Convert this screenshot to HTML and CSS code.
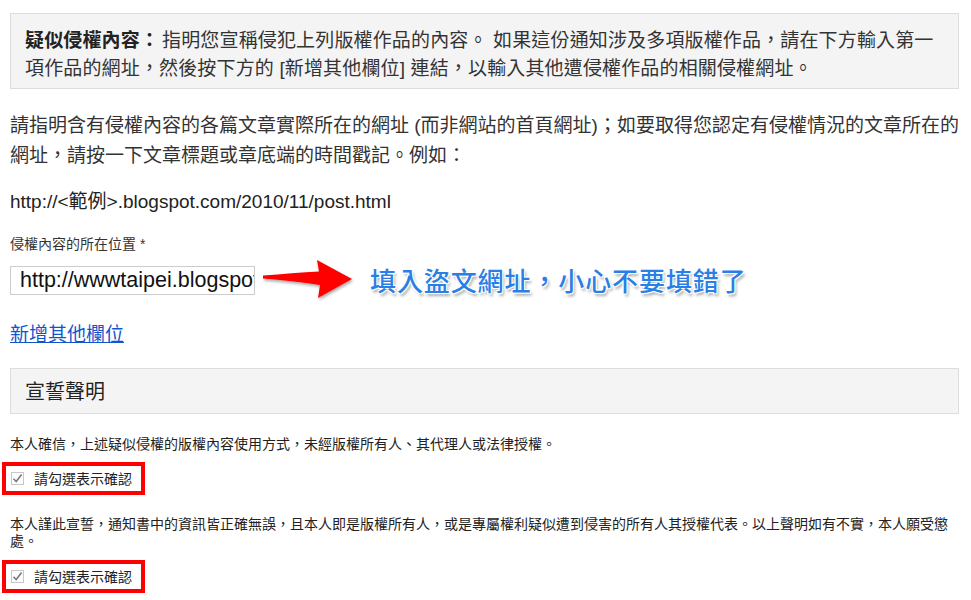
FILE: index.html
```html
<!DOCTYPE html>
<html lang="zh-Hant">
<head>
<meta charset="utf-8">
<link rel="stylesheet" href="styles.css">
</head>
<body>
<div class="page">
  <div class="notice"><b class="notice-title">疑似侵權內容：</b><span class="notice-body">指明您宣稱侵犯上列版權作品的內容。 如果這份通知涉及多項版權作品，請在下方輸入第一項作品的網址，然後按下方的 [新增其他欄位] 連結，以輸入其他遭侵權作品的相關侵權網址。</span></div>

  <p class="para">請指明含有侵權內容的各篇文章實際所在的網址 (而非網站的首頁網址)；如要取得您認定有侵權情況的文章所在的網址，請按一下文章標題或章底端的時間戳記。例如：</p>

  <p class="example">http://&lt;範例&gt;.blogspot.com/2010/11/post.html</p>

  <label class="label" for="url">侵權內容的所在位置 *</label>

  <div class="input-row">
    <input id="url" class="url-input" type="text" value="http://wwwtaipei.blogspot.com/">
    <svg class="arrow" width="96" height="46" viewBox="0 0 96 46" aria-hidden="true">
      <defs>
        <filter id="sh" x="-20%" y="-30%" width="140%" height="160%">
          <feDropShadow dx="1" dy="2" stdDeviation="1.5" flood-color="#000" flood-opacity="0.35"/>
        </filter>
      </defs>
      <path d="M1 18.5 C20 17 40 15.5 57 14.5 L55 3 L90 22 L56 41 L58 28 C40 25 20 23 1 21.5 Z" fill="#ff0000" filter="url(#sh)"/>
    </svg>
    <span class="caption">填入盜文網址，小心不要填錯了</span>
  </div>

  <a class="add-link" href="#">新增其他欄位</a>

  <div class="section-head">宣誓聲明</div>

  <p class="small first">本人確信，上述疑似侵權的版權內容使用方式，未經版權所有人、其代理人或法律授權。</p>

  <div class="confirm">
    <span class="check"><svg width="11" height="11" viewBox="0 0 11 11"><path d="M1.5 5.8 L4.2 8.6 L9.6 1.6" fill="none" stroke="#7a7a7a" stroke-width="1.6"/></svg></span>
    <span class="confirm-text">請勾選表示確認</span>
  </div>

  <p class="small second">本人謹此宣誓，通知書中的資訊皆正確無誤，且本人即是版權所有人，或是專屬權利疑似遭到侵害的所有人其授權代表。以上聲明如有不實，本人願受懲處。</p>

  <div class="confirm">
    <span class="check"><svg width="11" height="11" viewBox="0 0 11 11"><path d="M1.5 5.8 L4.2 8.6 L9.6 1.6" fill="none" stroke="#7a7a7a" stroke-width="1.6"/></svg></span>
    <span class="confirm-text">請勾選表示確認</span>
  </div>
</div>
</body>
</html>
```
FILE: styles.css
```css
html, body {
  margin: 0;
  padding: 0;
  background: #ffffff;
}

body {
  font-family: "Liberation Sans", Arial, "Noto Sans CJK TC", sans-serif;
  color: #222222;
}

.page {
  width: 949px;
  padding: 13px 0 0 10px;
}

.notice {
  border: 1px solid #dddddd;
  background: #f4f4f4;
  padding: 13px 14px 5px 14px;
  font-size: 19px;
  line-height: 28px;
  letter-spacing: 0.15px;
  color: #333333;
}

.notice-title {
  display: inline-block;
  font-weight: 700;
  color: #222222;
  margin-right: 3px;
}

.para {
  margin: 22px 0 0 0;
  font-size: 19px;
  line-height: 30px;
  color: #333333;
}

.example {
  margin: 16px 0 0 0;
  font-size: 19px;
  line-height: 30px;
  color: #222222;
}

.label {
  display: block;
  margin-top: 17px;
  font-size: 14px;
  line-height: 20px;
  color: #333333;
}

.input-row {
  display: flex;
  align-items: center;
  margin-top: 11px;
  height: 30px;
}

.url-input {
  box-sizing: border-box;
  width: 245px;
  height: 29px;
  border: 1px solid #cccccc;
  padding: 0 0 0 9px;
  margin: 0;
  font-family: "Liberation Sans", Arial, sans-serif;
  font-size: 21.5px;
  color: #111111;
  background: #ffffff;
  outline: none;
}

.arrow {
  margin-left: 7px;
  flex: none;
}

.caption {
  margin-left: 12px;
  font-family: "Noto Sans CJK TC", sans-serif;
  font-size: 26px;
  font-weight: 500;
  letter-spacing: 0.9px;
  line-height: 30px;
  color: #2a7fe6;
  text-shadow:
    -1px -1px 0 #fff, 1px -1px 0 #fff, -1px 1px 0 #fff, 1px 1px 0 #fff,
    2px 3px 3px rgba(0, 0, 0, 0.35);
}

.add-link {
  display: block;
  width: max-content;
  margin-top: 26px;
  font-size: 19px;
  line-height: 28px;
  color: #1155cc;
  text-decoration: underline;
}

.section-head {
  box-sizing: border-box;
  margin-top: 19px;
  height: 46px;
  border: 1px solid #dddddd;
  background: #f4f4f4;
  padding: 3px 14px 0 14px;
  font-size: 20px;
  line-height: 41px;
  color: #222222;
}

.small {
  font-size: 14px;
  color: #222222;
}

.small.first {
  margin: 21px 0 0 0;
  line-height: 18px;
}

.small.second {
  margin: 21px 0 0 0;
  line-height: 17px;
}

.confirm {
  box-sizing: border-box;
  display: flex;
  align-items: center;
  width: 143px;
  height: 33px;
  margin: 9px 0 0 -8px;
  border: 4px solid #ff0000;
  padding-left: 5px;
}

.small.second + .confirm {
  margin-top: 10px;
}

.check {
  box-sizing: border-box;
  width: 13px;
  height: 13px;
  border: 1px solid #c8c8c8;
  background: #fdfdfd;
  display: flex;
  align-items: center;
  justify-content: center;
}

.confirm-text {
  margin-left: 10px;
  font-size: 14px;
  line-height: 18px;
  color: #222222;
}
```
